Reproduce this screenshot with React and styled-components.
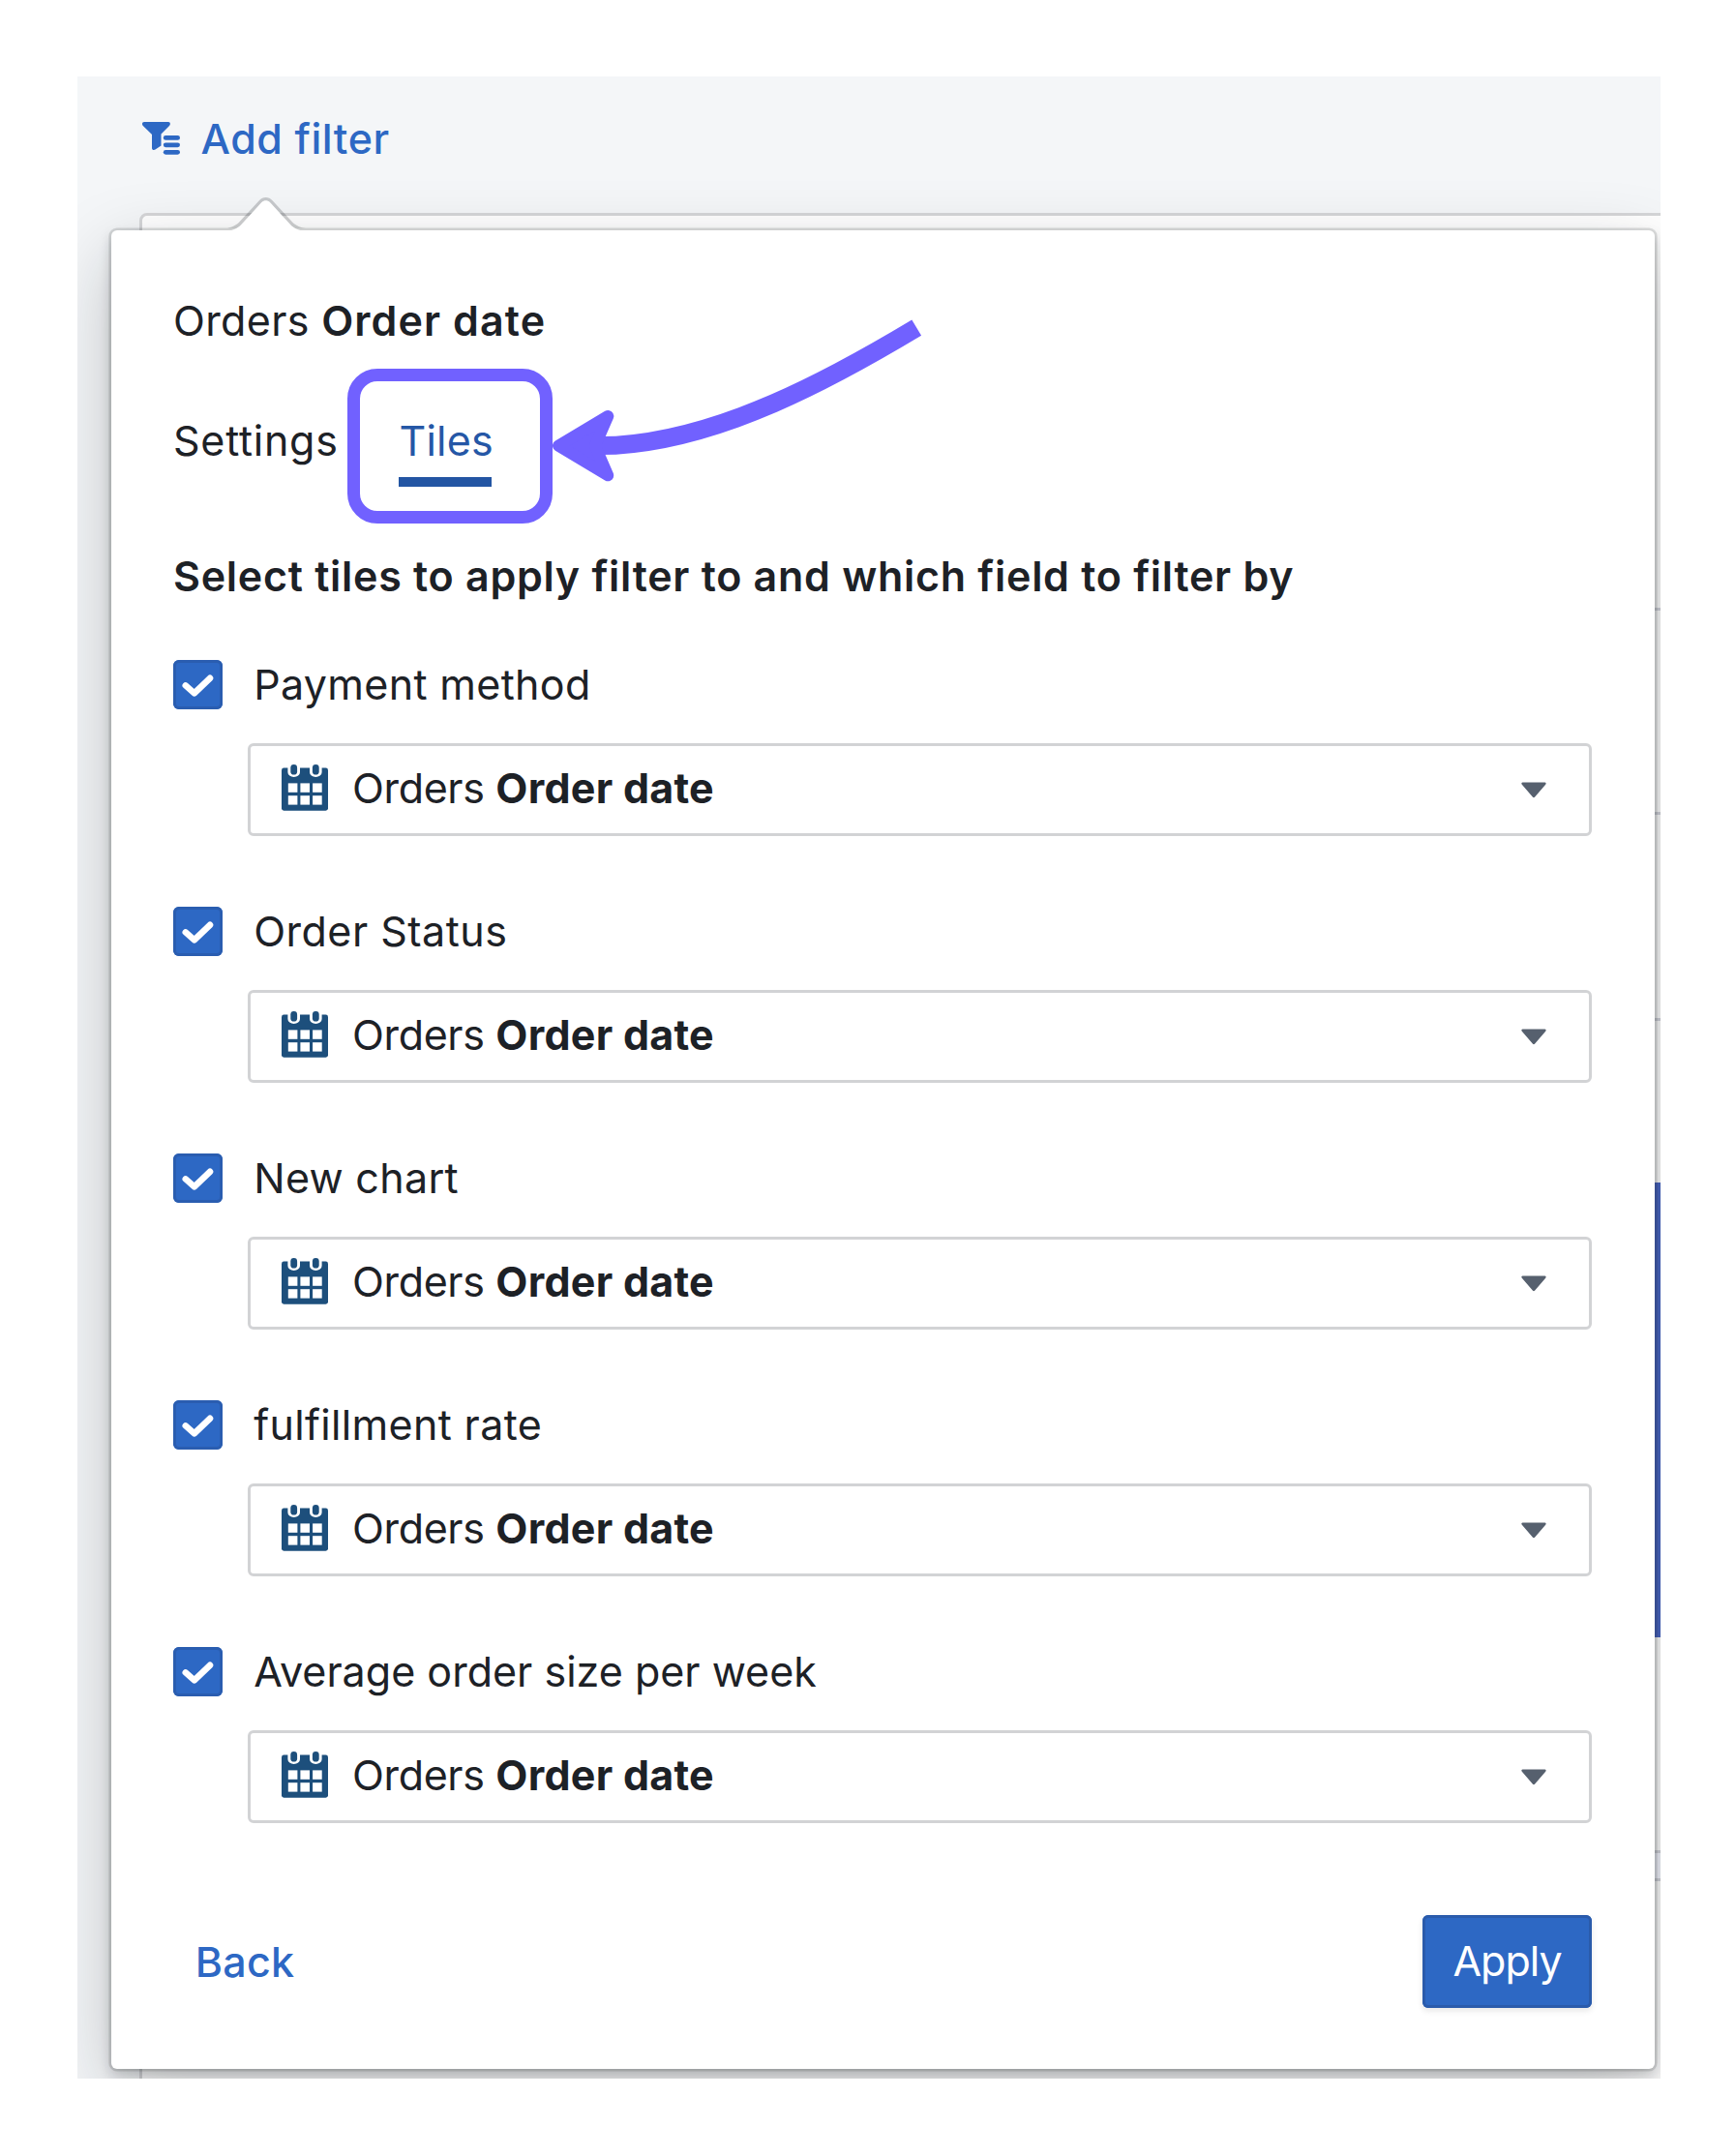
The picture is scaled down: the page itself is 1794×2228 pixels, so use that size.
import React, { useState } from "react";
import styled, { createGlobalStyle } from "styled-components";

const GlobalStyle = createGlobalStyle`
  * { box-sizing: border-box; }
  body {
    margin: 0;
    background: #ffffff;
    color: #1d2126;
    font-family: Inter, "Liberation Sans", sans-serif;
    font-size: 43px;
    -webkit-font-smoothing: antialiased;
  }
  button { font: inherit; border: 0; background: none; padding: 0; cursor: pointer; }
`;

const Page = styled.div`
  width: 1794px;
  height: 2228px;
  padding: 79px 78px 80px 80px;
`;

const Dashboard = styled.main`
  position: relative;
  width: 1636px;
  height: 2069px;
  overflow: hidden;
  background: #f4f6f8;
  display: flex;
  flex-direction: column;
`;

const AddFilter = styled.button`
  display: flex;
  align-items: center;
  gap: 22px;
  height: 141px;
  padding: 0 0 14px 66.5px;
  color: #2d68c4;
  font-weight: 500;
  letter-spacing: 0.55px;
`;

const TileGrid = styled.section`
  flex: 1;
  margin: 0 -20px -20px 64px;
  border: 3px solid #d5d6d8;
  border-radius: 8px;
  background: #ffffff;
  display: flex;
  flex-direction: column;
  align-items: flex-end;
`;

const GridGap = styled.div`
  width: 60px;
  height: ${(p) => p.$h}px;
  border-bottom: 3px solid ${(p) => p.$line || "#d4d5dd"};
  background: ${(p) => p.$fill || "transparent"};
`;

const Popover = styled.div`
  position: absolute;
  left: 35px;
  top: 159px;
  width: 1594.5px;
  height: 1900px;
  padding: 65px 64.5px 0 64px;
  border-radius: 6px;
  background: #ffffff;
  box-shadow: 0 0 0 2.6px rgba(17, 20, 24, 0.13), 0 6px 13px rgba(17, 20, 24, 0.2),
    0 25px 76px rgba(17, 20, 24, 0.23);
`;

const PopoverArrow = styled.svg`
  position: absolute;
  left: 111.7px;
  top: -34.3px;
  width: 95.4px;
  height: 95.4px;
`;

const Field = styled.span`
  white-space: pre;
  letter-spacing: ${(p) => p.$track}px;
  font-weight: ${(p) => p.$weight || 400};
`;

const Title = styled.div`
  height: 56px;
  line-height: 56px;
`;

const Tabs = styled.div`
  display: flex;
  gap: 63px;
  margin-top: 64px;
`;

const Tab = styled.button`
  height: 80px;
  padding-bottom: 6px;
  line-height: 64px;
  text-align: left;
  text-indent: ${(p) => (p.$active ? 1 : 0)}px;
  width: ${(p) => p.$w}px;
  white-space: nowrap;
  letter-spacing: ${(p) => p.$track}px;
  color: ${(p) => (p.$active ? "#2557a6" : "#1d2126")};
  border-bottom: 10px solid ${(p) => (p.$active ? "#2355a3" : "transparent")};
`;

const Heading = styled.h2`
  margin: 64px 0 59px;
  font-size: 43px;
  font-weight: 600;
  line-height: 56px;
  letter-spacing: 0.72px;
  white-space: nowrap;
`;

const TileList = styled.div`
  display: flex;
  flex-direction: column;
  gap: 73.5px;
`;

const TileItem = styled.div`
  display: flex;
  flex-direction: column;
  gap: 35px;
`;

const TileLabel = styled.label`
  display: flex;
  align-items: center;
  gap: 32.2px;
  height: 51px;
  line-height: 51px;
  white-space: nowrap;
  letter-spacing: ${(p) => p.$track}px;
`;

const Checkbox = styled.button`
  display: flex;
  width: 51px;
  height: 51px;
  border-radius: 6px;
  background: ${(p) => (p.$checked ? "#2d68c4" : "#ffffff")};
  box-shadow: inset 0 0 0 3px ${(p) => (p.$checked ? "#2a5db0" : "#c5c8cc")};
`;

const Select = styled.button`
  display: flex;
  align-items: center;
  height: 95.5px;
  margin-left: 76.5px;
  padding: 0 44px 4px 32px;
  border: 3px solid #d2d3d5;
  border-radius: 6px;
  color: #1d2126;
`;

const SelectValue = styled.span`
  flex: 1;
  margin-left: 25.5px;
  text-align: left;
`;

const Footer = styled.div`
  display: flex;
  justify-content: space-between;
  margin-top: 95.5px;
`;

const BackButton = styled.button`
  height: 95.5px;
  padding-left: 22.7px;
  color: #2d68c4;
  font-weight: 500;
  letter-spacing: 0.3px;
`;

const ApplyButton = styled.button`
  width: 175px;
  height: 95.5px;
  padding-bottom: 2px;
  border-radius: 6px;
  background: #2d68c4;
  color: #ffffff;
  letter-spacing: -1px;
  box-shadow: inset 0 0 0 3px #2a5bab, 0 3px 6px rgba(17, 20, 24, 0.1);
`;

const Highlight = styled.div`
  position: absolute;
  left: 279px;
  top: 302px;
  width: 211.5px;
  height: 159.5px;
  border: 13px solid #7161ff;
  border-radius: 31px;
`;

const Pointer = styled.svg`
  position: absolute;
  left: 480px;
  top: 241px;
  width: 400px;
  height: 190px;
`;

const Caret = styled.svg`
  margin-top: 5px;
`;

const FilterListIcon = () => (
  <svg width="39" height="34" viewBox="0 0 39 34" fill="currentColor">
    <path d="M2 0H27C29 0 29.5 2.5 28 4L19.5 12.5V24.5L13.5 28.6C12 29.6 10 29 10 27V13L.8 4C-.7 2.3 0 0 2 0Z" />
    <rect x="21.8" y="14" width="17.2" height="4.8" rx="2.4" />
    <rect x="21.8" y="21.4" width="17.2" height="4.8" rx="2.4" />
    <rect x="21.8" y="28.9" width="17.2" height="4.8" rx="2.4" />
  </svg>
);

const CalendarIcon = () => (
  <svg width="48" height="48" viewBox="0 0 48 48">
    <rect y="3.5" width="48" height="44.2" rx="2.4" fill="#1d4f7c" />
    <path fill="#fff" d="M6.4 0H19V8a6.3 5 0 0 1-12.6 0ZM29 0H41.6V8a6.3 5 0 0 1-12.6 0Z" />
    <rect x="9.3" y="0" width="6.8" height="10.6" rx="3.4" fill="#1d4f7c" />
    <rect x="31.9" y="0" width="6.8" height="10.6" rx="3.4" fill="#1d4f7c" />
    {[19.4, 32.2].map((y) =>
      [6.8, 19.4, 32.1].map((x) => (
        <rect key={`${x}-${y}`} x={x} y={y} width="9.6" height="9.4" fill="#fff" />
      ))
    )}
  </svg>
);

const CaretIcon = () => (
  <Caret width="26" height="17" viewBox="0 0 26 17">
    <path fill="#56606e" d="M1.6.5H24.4C25.8.5 26 1.8 25.2 2.7L14.2 15.6C13.5 16.5 12.5 16.5 11.8 15.6L.8 2.7C0 1.8.2.5 1.6.5Z" />
  </Caret>
);

const CheckIcon = () => (
  <svg width="51" height="51" viewBox="0 0 51 51">
    <path d="M12.8 26.4L21.8 34.4L38 18.8" fill="none" stroke="#fff" strokeWidth="6.6" strokeLinecap="round" strokeLinejoin="round" />
  </svg>
);

const TILES = [
  { name: "Payment method", track: 0.33 },
  { name: "Order Status", track: 0.5 },
  { name: "New chart", track: 0.3 },
  { name: "fulfillment rate", track: 0.35 },
  { name: "Average order size per week", track: 0.02 },
];

function Tile({ name, track }) {
  const [checked, setChecked] = useState(true);
  return (
    <TileItem>
      <TileLabel $track={track}>
        <Checkbox $checked={checked} onClick={() => setChecked(!checked)}>
          {checked && <CheckIcon />}
        </Checkbox>
        {name}
      </TileLabel>
      <Select>
        <CalendarIcon />
        <SelectValue>
          <Field $track={-0.35}>Orders </Field>
          <Field $weight={700} $track={0.27}>Order date</Field>
        </SelectValue>
        <CaretIcon />
      </Select>
    </TileItem>
  );
}

export default function App() {
  return (
    <Page>
      <GlobalStyle />
      <Dashboard>
        <AddFilter>
          <FilterListIcon />
          Add filter
        </AddFilter>
        <TileGrid>
          <GridGap $h={408} />
          <GridGap $h={211} />
          <GridGap $h={213} />
          <GridGap $h={167} $line="transparent" />
          <GridGap $h={470} $fill="#4a66c4" $line="#4a66c4" />
          <GridGap $h={223} />
          <GridGap $h={29} $fill="#f5f7ff" />
        </TileGrid>
        <Popover>
          <PopoverArrow viewBox="0 0 30 30">
            <g transform="translate(30 0) rotate(90)">
              <path fill="#111418" fillOpacity="0.2" d="M8.11 6.302c1.015-.936 1.887-2.922 1.887-4.297v26c0-1.378-.868-3.357-1.888-4.297L.925 17.09c-1.237-1.14-1.233-3.034 0-4.17L8.11 6.302z" />
              <path fill="#fff" d="M8.787 7.036c1.22-1.125 2.21-3.376 2.21-5.03V0v30-2.005c0-1.654-.983-3.9-2.21-5.03l-7.183-6.616c-.81-.746-.802-1.96 0-2.7l7.183-6.614z" />
            </g>
          </PopoverArrow>
          <Title>
            <Field $track={0.35}>Orders </Field>
            <Field $weight={600} $track={1.1}>Order date</Field>
          </Title>
          <Tabs>
            <Tab $w={169.5} $track={0.75}>Settings</Tab>
            <Tab $w={96} $track={0.2} $active>Tiles</Tab>
          </Tabs>
          <Heading>Select tiles to apply filter to and which field to filter by</Heading>
          <TileList>
            {TILES.map((t) => (
              <Tile key={t.name} {...t} />
            ))}
          </TileList>
          <Footer>
            <BackButton>Back</BackButton>
            <ApplyButton>Apply</ApplyButton>
          </Footer>
        </Popover>
        <Highlight />
        <Pointer viewBox="560 320 400 190">
          <path d="M620 460.6C740 460 870 385 947.2 338.7" fill="none" stroke="#7161ff" strokeWidth="19" />
          <path d="M577 460.6L628.3 430L615 460.6L628.3 491.3Z" fill="#7161ff" stroke="#7161ff" strokeWidth="12" strokeLinejoin="round" />
        </Pointer>
      </Dashboard>
    </Page>
  );
}
